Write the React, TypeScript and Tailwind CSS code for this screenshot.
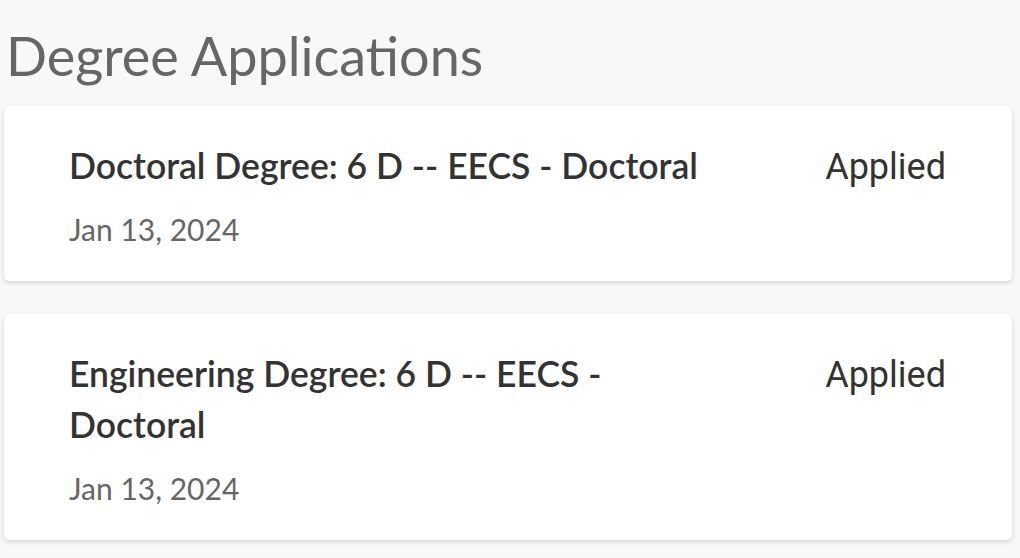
const applications = [
  { title: "Doctoral Degree: 6 D -- EECS - Doctoral", date: "Jan 13, 2024", status: "Applied" },
  { title: "Engineering Degree: 6 D -- EECS - Doctoral", date: "Jan 13, 2024", status: "Applied" },
];

function ApplicationCard({ title, date, status }: { title: string; date: string; status: string }) {
  return (
    <div className="rounded-[5px] bg-white pl-[65px] pr-[66px] pt-[34px] pb-[32px] shadow-[0_2px_5px_rgba(0,0,0,0.14)]">
      <div className="flex justify-between">
        <div className="w-[650px]">
          <div className="font-['Lato',sans-serif] text-[35.5px] font-semibold leading-[51px] text-[#333333]">
            {title}
          </div>
          <div className="mt-[18px] font-['Lato',sans-serif] text-[30px] leading-[40px] text-[#666666]">
            {date}
          </div>
        </div>
        <div className="pt-[2px] font-['Roboto',sans-serif] text-[36px] leading-[51px] text-[#333333]">{status}</div>
      </div>
    </div>
  );
}

export default function App() {
  return (
    <div className="h-[558px] w-full overflow-hidden bg-[#f8f8f8] pl-[4px] pr-[8px]">
      <h1 className="pl-[2px] pt-[22px] pb-[16px] font-['Lato',sans-serif] text-[54px] leading-[68px] text-[#666666]">
        Degree Applications
      </h1>
      <div className="flex flex-col gap-[33px]">
        {applications.map((app) => (
          <ApplicationCard key={app.title} {...app} />
        ))}
      </div>
    </div>
  );
}
